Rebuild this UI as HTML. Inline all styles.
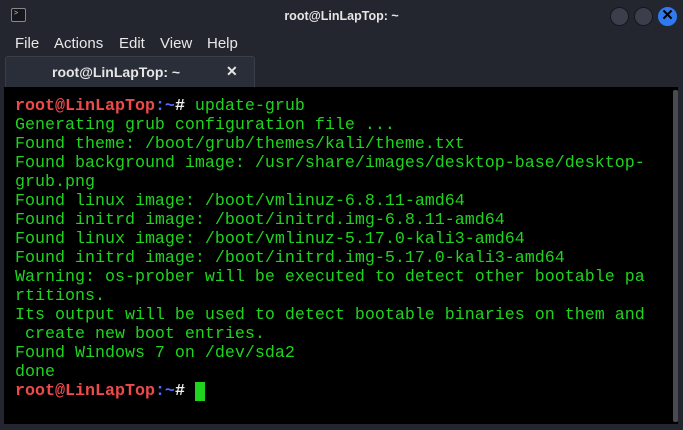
<!DOCTYPE html>
<html><head><meta charset="utf-8"><style>
body{margin:0;width:683px;height:430px;overflow:hidden;background:#23262f;font-family:"Liberation Sans",sans-serif;position:relative}
.t{position:absolute;color:#e6e6e6}
.title{left:0;width:683px;top:9px;text-align:center;font-size:12.5px;font-weight:bold;color:#e6e6e6}
.menu{top:35px;font-size:15px;color:#e8e8e8}
.tab{position:absolute;left:5px;top:56px;width:248px;height:31px;background:#2a2e38;border:1px solid #3a3e48;border-bottom:none;border-radius:3px 3px 0 0}
.term{position:absolute;left:4px;top:87px;width:674px;height:337px;background:#000}
.sb{position:absolute;left:673px;top:90px;width:5px;height:332px;background:#4a4b50;border-radius:2px}
pre{position:absolute;left:15px;top:97px;margin:0;font-family:"Liberation Mono",monospace;font-size:16.67px;line-height:19px;color:#1fd41f}
.r{color:#ef4a4a;font-weight:bold}.b{color:#4f6cff;font-weight:bold}
.c{position:absolute;top:7px;width:17px;height:17px;border-radius:50%;background:#3b3f4c;border:1px solid #15171c}
</style></head><body>
<div style="position:absolute;left:11px;top:8px;width:13px;height:12px;border:1px solid #888;border-radius:2px;background:#15171c"></div>
<div style="position:absolute;left:14px;top:10px;color:#ccc;font-size:7px">&gt;</div>
<div class="t title">root@LinLapTop: ~</div>
<div class="c" style="left:610px"></div>
<div class="c" style="left:634px"></div>
<div class="c" style="left:658px;background:#2f7af0;border-color:#2f7af0"></div>
<div class="t" style="left:659px;top:6px;width:17px;text-align:center;font-size:15px;font-weight:bold;color:#000">✕</div>
<div class="t menu" style="left:15px">File</div>
<div class="t menu" style="left:54px">Actions</div>
<div class="t menu" style="left:119px">Edit</div>
<div class="t menu" style="left:160px">View</div>
<div class="t menu" style="left:207px">Help</div>
<div class="tab"></div>
<div class="t" style="left:52px;top:64px;font-size:14px;font-weight:bold">root@LinLapTop: ~</div>
<div class="t" style="left:226px;top:63px;font-size:14px;font-weight:bold">✕</div>
<div class="term"></div><div class="sb"></div>
<pre><span class="r">root@LinLapTop</span><span class="b">:~</span><span style="font-weight:bold;color:#eee">#</span> update-grub
Generating grub configuration file ...
Found theme: /boot/grub/themes/kali/theme.txt
Found background image: /usr/share/images/desktop-base/desktop-
grub.png
Found linux image: /boot/vmlinuz-6.8.11-amd64
Found initrd image: /boot/initrd.img-6.8.11-amd64
Found linux image: /boot/vmlinuz-5.17.0-kali3-amd64
Found initrd image: /boot/initrd.img-5.17.0-kali3-amd64
Warning: os-prober will be executed to detect other bootable pa
rtitions.
Its output will be used to detect bootable binaries on them and
 create new boot entries.
Found Windows 7 on /dev/sda2
done
<span class="r">root@LinLapTop</span><span class="b">:~</span><span style="font-weight:bold;color:#eee">#</span> <span style="background:#1fd41f"> </span></pre>
</body></html>
